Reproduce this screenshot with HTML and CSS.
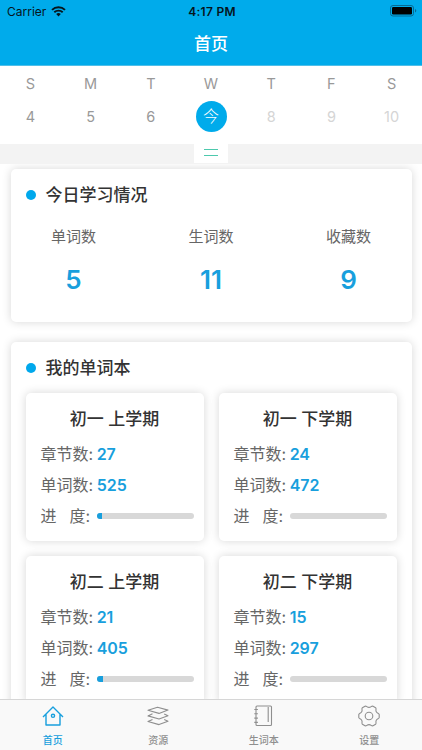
FILE: index.html
```
<!DOCTYPE html>
<html lang="zh-CN">
<head>
    <meta charset="utf-8" />
    <title>首页</title>
    <link rel="stylesheet" href="styles.css">
</head>
<body>
    <header class="header">
        <div class="status-bar">
            <div class="carrier">
                <span>Carrier</span>
                <svg width="15" height="11" viewBox="0 0 15 11">
                    <path d="M1 3.9a9.3 9.3 0 0 1 13 0M3.3 6.3a6 6 0 0 1 8.4 0" fill="none" stroke="#06151c" stroke-width="1.9" />
                    <path d="M7.5 10.4L5.2 8.1a3.3 3.3 0 0 1 4.6 0z" fill="#06151c" />
                </svg>
            </div>
            <div class="clock">4:17 PM</div>
            <div class="battery">
                <svg width="27" height="12" viewBox="0 0 27 12">
                    <rect x=".5" y=".5" width="23" height="10.5" rx="2.5" fill="none" stroke="#066a93" />
                    <rect x="2" y="2" width="20" height="7.5" rx="1.2" fill="#000" />
                    <path d="M25 4v3.6q1.3-.5 1.3-1.8T25 4z" fill="#066a93" />
                </svg>
            </div>
        </div>
        <h1 class="title">首页</h1>
    </header>

    <section class="calendar">
        <div class="week">
            <span>S</span><span>M</span><span>T</span><span>W</span><span>T</span><span>F</span><span>S</span>
        </div>
        <div class="days">
            <span>4</span>
            <span>5</span>
            <span>6</span>
            <span><b class="today">今</b></span>
            <span class="future">8</span>
            <span class="future">9</span>
            <span class="future">10</span>
        </div>
    </section>
    <div class="knob-bar">
        <div class="knob"></div>
    </div>

    <main class="content">
        <section class="card">
            <h2 class="card-title">今日学习情况</h2>
            <div class="stats">
                <div class="stat"><span>单词数</span><strong>5</strong></div>
                <div class="stat"><span>生词数</span><strong>11</strong></div>
                <div class="stat"><span>收藏数</span><strong>9</strong></div>
            </div>
        </section>

        <section class="card">
            <h2 class="card-title">我的单词本</h2>
            <div class="books">
                <div class="book">
                    <h3>初一 上学期</h3>
                    <p>章节数: <b>27</b></p>
                    <p>单词数: <b>525</b></p>
                    <p class="progress"><span>进</span><span>度:</span><i class="bar"><i class="bar-fill" style="width: 5%"></i></i></p>
                </div>
                <div class="book">
                    <h3>初一 下学期</h3>
                    <p>章节数: <b>24</b></p>
                    <p>单词数: <b>472</b></p>
                    <p class="progress"><span>进</span><span>度:</span><i class="bar"></i></p>
                </div>
                <div class="book">
                    <h3>初二 上学期</h3>
                    <p>章节数: <b>21</b></p>
                    <p>单词数: <b>405</b></p>
                    <p class="progress"><span>进</span><span>度:</span><i class="bar"><i class="bar-fill" style="width: 6%"></i></i></p>
                </div>
                <div class="book">
                    <h3>初二 下学期</h3>
                    <p>章节数: <b>15</b></p>
                    <p>单词数: <b>297</b></p>
                    <p class="progress"><span>进</span><span>度:</span><i class="bar"></i></p>
                </div>
            </div>
        </section>
    </main>

    <nav class="tabs">
        <a class="tab active">
            <svg width="24" height="24" viewBox="0 0 24 24">
                <path d="M2 13L12 3l10 10M5 10.5V21h14V10.5" />
                <circle cx="12" cy="11.8" r="1.6" />
            </svg>
            <span>首页</span>
        </a>
        <a class="tab">
            <svg width="24" height="24" viewBox="0 0 24 24">
                <path d="M2 6.3L11.5 3.2L22 6.1L13 9.4z" />
                <path d="M6.5 9.8L2 11.9L13 15L22 11.7L18.2 9.9" />
                <path d="M6.5 15.5L2 17.5L13 20.6L22 17.3L18.2 15.6" />
            </svg>
            <span>资源</span>
        </a>
        <a class="tab">
            <svg width="24" height="24" viewBox="0 0 24 24">
                <rect x="4" y="2" width="15.5" height="19.5" rx="1" />
                <path d="M16.2 3v15M2.3 5.5h3.6M2.3 9.8h3.6M2.3 14.1h3.6M2.3 18.4h3.6" />
            </svg>
            <span>生词本</span>
        </a>
        <a class="tab">
            <svg width="24" height="24" viewBox="0 0 24 24">
                <path d="M8 2.2C9.6 1.6 9.8 3.4 12 3.4S14.4 1.6 16 2.2L18.6 3.7C19.8 5 18.2 6 19.3 7.8S21.7 8.9 22.2 10.4V13.6C21.7 15.1 20.4 14.4 19.3 16.2S19.8 19 18.6 20.3L16 21.8C14.4 22.4 14.2 20.6 12 20.6S9.6 22.4 8 21.8L5.4 20.3C4.2 19 5.8 18 4.7 16.2S2.3 15.1 1.8 13.6V10.4C2.3 8.9 3.6 9.6 4.7 7.8S4.2 5 5.4 3.7z" />
                <circle cx="12" cy="12" r="3.8" />
            </svg>
            <span>设置</span>
        </a>
    </nav>
</body>
</html>
```
FILE: styles.css
```
* {
    box-sizing: border-box;
}

body {
    margin: 0;
    height: 750px;
    display: flex;
    flex-direction: column;
    overflow: hidden;
    background: #fff;
    color: #666;
    font-family: Inter, "Noto Sans CJK SC", sans-serif;
}

h1, h2, h3, p {
    margin: 0;
    font-weight: 500;
}

.header {
    flex: none;
    height: 66px;
    background: #00abeb;
    border-bottom: 1px solid #4fbfe9;
}

.status-bar {
    display: grid;
    grid-template-columns: 1fr auto 1fr;
    align-items: center;
    height: 22px;
    padding: 0 5px 0 7px;
    color: #06151c;
    font-size: 12px;
}

.carrier {
    display: flex;
    align-items: center;
    gap: 5px;
}

.clock {
    font-weight: 600;
    letter-spacing: 0.3px;
}

.battery {
    display: flex;
    justify-content: flex-end;
}

.title {
    height: 43px;
    line-height: 44px;
    text-align: center;
    color: #fff;
    font-size: 17px;
}

.calendar {
    flex: none;
    height: 78px;
    padding-top: 8px;
    color: #999;
    font-size: 14.5px;
}

.week, .days {
    display: grid;
    grid-template-columns: repeat(7, 60.2px);
    justify-content: center;
    text-align: center;
}

.week {
    line-height: 20px;
}

.days {
    align-items: center;
    height: 32px;
    margin-top: 6px;
}

.future {
    color: #d5d5d5;
}

.today {
    display: block;
    width: 31px;
    height: 31px;
    margin: auto;
    border-radius: 50%;
    background: #00abeb;
    color: #fff;
    font-size: 16px;
    font-weight: 300;
    line-height: 30px;
}

.knob-bar {
    flex: none;
    display: flex;
    justify-content: center;
    height: 20px;
    background: #f3f3f3;
}

.knob {
    width: 34px;
    height: 19px;
    padding: 5px 10px 0;
    background: #fff;
}

.knob::before {
    content: "";
    display: block;
    height: 5px;
    border-top: 1px solid #4dc9ad;
    border-bottom: 1px solid #4dc9ad;
}

.content {
    flex: 1;
    min-height: 0;
    padding: 5px 10.5px 0;
    overflow: hidden;
}

.card {
    height: 153px;
    padding: 15px 15px 0;
    border-radius: 5px;
    background: #fff;
    box-shadow: 0 0 10px rgba(0, 0, 0, 0.16);
}

.card + .card {
    height: 480px;
    margin-top: 20px;
}

.card-title {
    display: flex;
    align-items: center;
    gap: 10px;
    height: 22px;
    color: #333;
    font-size: 17px;
    line-height: 20px;
}

.card-title::before {
    content: "";
    width: 10px;
    height: 10px;
    border-radius: 50%;
    background: #00a8ec;
}

.stats {
    display: flex;
    justify-content: space-between;
    padding: 20px 10px 0;
}

.stat {
    display: flex;
    flex-direction: column;
    align-items: center;
    width: 76px;
    font-size: 15px;
    line-height: 22px;
}

.stat strong {
    margin-top: 17px;
    color: #189fdd;
    font-size: 26px;
    font-weight: 600;
    line-height: 30px;
}

.books {
    display: grid;
    grid-template-columns: 1fr 1fr;
    gap: 15px;
    margin-top: 14px;
}

.book {
    height: 148px;
    padding: 14px 15px 0;
    border-radius: 5px;
    background: #fff;
    box-shadow: 0 0 10px rgba(0, 0, 0, 0.16);
}

.book h3 {
    height: 23px;
    margin-bottom: 9px;
    color: #333;
    font-size: 17px;
    line-height: 24px;
    text-align: center;
}

.book p {
    height: 30.7px;
    font-size: 16px;
    font-weight: 400;
    line-height: 30px;
    white-space: nowrap;
}

.book b {
    margin-left: -1px;
    color: #189fdd;
    font-weight: 600;
}

.book .progress {
    display: flex;
    align-items: center;
    gap: 13px;
    margin-right: -5px;
}

.bar {
    flex: 1;
    height: 6px;
    margin-left: -6px;
    border-radius: 3px;
    background: #d8d8d8;
    overflow: hidden;
}

.bar-fill {
    display: block;
    height: 100%;
    background: #189fdd;
}

.tabs {
    flex: none;
    display: grid;
    grid-template-columns: repeat(4, 1fr);
    height: 51px;
    border-top: 1px solid #d6d6d6;
    background: #f9f9f9;
    z-index: 1;
}

.tab {
    display: flex;
    flex-direction: column;
    align-items: center;
    padding-top: 4px;
    color: #8f8f8f;
    font-size: 10px;
    font-weight: 500;
    line-height: 15px;
}

.tab svg {
    margin-bottom: 5px;
    fill: none;
    stroke: currentColor;
    stroke-width: 1.1;
    stroke-linejoin: round;
}

.tab.active {
    color: #189fdd;
}

.tab.active svg {
    stroke-width: 1.4;
}
```
